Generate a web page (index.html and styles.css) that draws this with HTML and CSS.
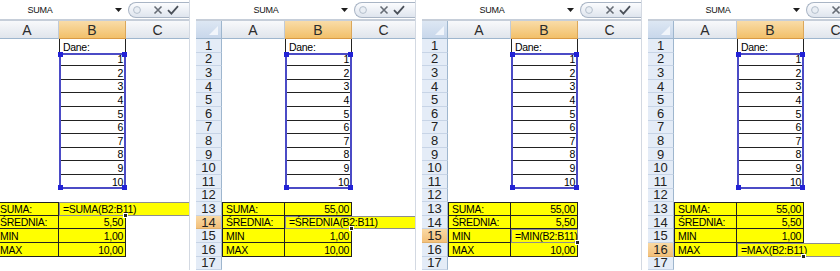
FILE: index.html
```html
<!DOCTYPE html>
<html lang="pl">
<head>
  <meta charset="UTF-8" />
  <meta name="viewport" content="width=device-width, initial-scale=1.0"/>
  <title>SUMA, ŚREDNIA, MIN, MAX</title>
  <link rel="stylesheet" href="styles.css">
</head>
<body>

  <div class="screen" id="screen"></div>

  <script>
    // ----------- Sheet data -----------
    const rows = [
      ["", "Dane:"],
      ["", "1"], ["", "2"], ["", "3"], ["", "4"], ["", "5"],
      ["", "6"], ["", "7"], ["", "8"], ["", "9"], ["", "10"],
      ["", ""],
      ["SUMA:", "55,00"],
      ["ŚREDNIA:", "5,50"],
      ["MIN", "1,00"],
      ["MAX", "10,00"],
      ["", ""]
    ];

    // one panel per step, each editing the next formula
    const steps = [
      { row: 13, formula: "=SUMA(B2:B11)", wide: true },
      { row: 14, formula: "=ŚREDNIA(B2:B11)", wide: true },
      { row: 15, formula: "=MIN(B2:B11)", wide: false },
      { row: 16, formula: "=MAX(B2:B11)", wide: true }
    ];

    const formulaBar = `
      <div class="fbar">
        <div class="namebox">
          <span class="name">SUMA</span>
          <svg class="drop" width="7" height="4" viewBox="0 0 7 4"><path d="M0 0h7L3.5 4z" fill="#1e1e1e"/></svg>
        </div>
        <div class="fbtns">
          <svg class="dot" width="10" height="10" viewBox="0 0 10 10"><circle cx="5" cy="5" r="3.4" fill="#e9eef4" stroke="#b4bfcc" stroke-width="1"/></svg>
          <svg class="cancel" width="10" height="10" viewBox="0 0 10 10"><path d="M1.5 1.5l7 7M8.5 1.5l-7 7" stroke="#666c75" stroke-width="1.6"/></svg>
          <svg class="enter" width="12" height="10" viewBox="0 0 12 10"><path d="M1 5.2l3.4 3.4L11 1.2" fill="none" stroke="#4a5059" stroke-width="1.8"/></svg>
        </div>
      </div>`;

    function el(tag, cls, text) {
      const node = document.createElement(tag);
      node.className = cls;
      if (text) node.textContent = text;
      return node;
    }

    function buildPanel(step, index) {
      const panel = el("div", index === 0 ? "panel first" : "panel");
      panel.innerHTML = formulaBar;

      const sheet = el("div", "sheet");
      const grid = el("div", "grid");
      grid.appendChild(el("div", "corner"));
      ["A", "B", "C"].forEach(c => {
        grid.appendChild(el("div", c === "B" ? "colhead sel" : "colhead", c));
      });

      rows.forEach(([a, b], i) => {
        const r = i + 1;
        let aCls = "cell";
        let bCls = "cell";
        if (r === 1) bCls += " framed";
        if (r >= 2 && r <= 11) bCls += " framed line num";
        if (r >= 13 && r <= 16) {
          aCls += " tbl first";
          bCls += " tbl num";
          if (r === 13) { aCls += " top"; bCls += " top"; }
        }
        // the cell being edited shows its formula in the editor instead
        if (r === step.row) b = "";
        grid.appendChild(el("div", r === step.row ? "rowhead sel" : "rowhead", String(r)));
        grid.appendChild(el("div", aCls, a));
        grid.appendChild(el("div", bCls, b));
        grid.appendChild(el("div", "cell"));
      });

      // selection layer: referenced range, in-cell editor, fill handle
      const layer = el("div", "layer");
      const range = el("div", "range");
      ["tl", "tr", "bl", "br"].forEach(p => range.appendChild(el("i", p)));
      layer.appendChild(range);
      layer.appendChild(el("div", "edit r" + step.row + (step.wide ? " wide" : ""), step.formula));
      layer.appendChild(el("div", "handle r" + step.row));

      sheet.appendChild(grid);
      sheet.appendChild(layer);
      panel.appendChild(sheet);
      return panel;
    }

    const screen = document.getElementById("screen");
    steps.forEach((step, i) => screen.appendChild(buildPanel(step, i)));
  </script>
</body>
</html>
```

FILE: styles.css
```css
* {
  box-sizing: border-box;
}
body {
  margin: 0;
  width: 840px;
  height: 271px;
  overflow: hidden;
  background: #fff;
  font-family: "Liberation Sans", Arial, sans-serif;
  color: #000;
}
.screen {
  display: flex;
  gap: 6px;
  margin-left: -30px;
}
.panel {
  flex: 0 0 220px;
  overflow: hidden;
  border-right: 1px solid #d3d9e2;
}
/* the first window is scrolled off the left edge */
.panel.first .rowhead {
  visibility: hidden;
}

/* ----------- Formula bar ----------- */
.fbar {
  height: 21px;
  display: flex;
  align-items: center;
  background: #fff;
  border-bottom: 2px solid #c6ced9;
}
.namebox {
  flex: 0 0 156px;
  display: flex;
  align-items: center;
  height: 100%;
}
.name {
  width: 140px;
  text-align: center;
  font-size: 9px;
  letter-spacing: -0.3px;
  color: #111;
}
.drop {
  margin-left: 5px;
}
.fbtns {
  flex: 0 0 80px;
  height: 16px;
  margin-left: 2px;
  display: flex;
  align-items: center;
  border: 1px solid #a9b5c5;
  border-right: 0;
  border-radius: 8px 0 0 8px;
  background: linear-gradient(#fbfcfe, #dfe5ee);
}
.dot {
  margin-left: 3px;
}
.cancel {
  margin-left: 11px;
}
.enter {
  margin-left: 4px;
}

/* ----------- Sheet ----------- */
.sheet {
  position: relative;
}
.grid,
.layer {
  display: grid;
  grid-template-columns: 26px 63px 67px 64px;
  grid-template-rows: 18px repeat(17, 13.6px);
}
.layer {
  position: absolute;
  inset: 0;
  pointer-events: none;
}
.corner {
  position: relative;
  background: linear-gradient(#dde7f3, #c8d7eb);
  border-right: 1px solid #9eb6ce;
  border-bottom: 1px solid #9eb6ce;
}
.corner::after {
  content: "";
  position: absolute;
  right: 3px;
  bottom: 3px;
  border-style: solid;
  border-width: 0 0 9px 9px;
  border-color: transparent transparent #f1f5fb transparent;
}
.colhead {
  display: flex;
  align-items: center;
  justify-content: center;
  padding-top: 2px;
  font-size: 14px;
  line-height: 15px;
  color: #2c2c2c;
  background: linear-gradient(#f8f9fb, #e0e5ec);
  border-right: 1px solid #c0cad8;
  border-bottom: 1px solid #9eb6ce;
}
.colhead.sel {
  background: linear-gradient(#f9dca8, #f2c06a);
  border-right-color: #dba75a;
  border-bottom-color: #d99a45;
}
.rowhead {
  display: flex;
  align-items: center;
  justify-content: center;
  font-size: 13px;
  line-height: 13px;
  color: #222;
  background: #e4ecf7;
  border-right: 1px solid #9eb6ce;
  border-bottom: 1px solid #c7d4e6;
}
.rowhead.sel {
  background: linear-gradient(#f9d9a4, #f3c07a);
  border-bottom-color: #e2b06a;
}
.cell {
  display: flex;
  align-items: flex-end;
  padding: 0 2px 0 3px;
  font-size: 10.5px;
  letter-spacing: -0.3px;
  line-height: 12px;
  white-space: nowrap;
  overflow: hidden;
}
.num {
  justify-content: flex-end;
}
.framed {
  border-left: 1px solid #222;
  border-right: 1px solid #222;
}
.line {
  border-bottom: 1px solid #222;
}
.tbl {
  background: #ffff00;
  border-right: 1px solid #222;
  border-bottom: 1px solid #222;
}
.tbl.first {
  border-left: 1px solid #222;
}
.tbl.top {
  border-top: 1px solid #222;
}

/* ----------- Selection layer ----------- */
.range {
  position: relative;
  grid-row: 3 / 13;
  grid-column: 3;
  border: 2px solid #4b4bc6;
}
.range i {
  position: absolute;
  width: 5px;
  height: 5px;
  background: #2222d6;
}
.range .tl { left: -3px; top: -3px; }
.range .tr { right: -3px; top: -3px; }
.range .bl { left: -3px; bottom: -3px; }
.range .br { right: -3px; bottom: -3px; }

.edit {
  grid-column: 3;
  display: flex;
  align-items: flex-end;
  padding: 0 0 0 3px;
  font-size: 10.5px;
  letter-spacing: -0.3px;
  line-height: 12px;
  white-space: nowrap;
  background: #ffff00;
  border: 1px solid #8e8e8e;
}
.edit.wide {
  grid-column: 3 / 5;
  border-right: 0;
}
.handle {
  grid-column: 3;
  justify-self: end;
  align-self: end;
  width: 5px;
  height: 5px;
  margin: 0 -2px -2px 0;
  background: #222;
  border: 1px solid #fff;
}
.r13 { grid-row: 14; }
.r14 { grid-row: 15; }
.r15 { grid-row: 16; }
.r16 { grid-row: 17; }
```
